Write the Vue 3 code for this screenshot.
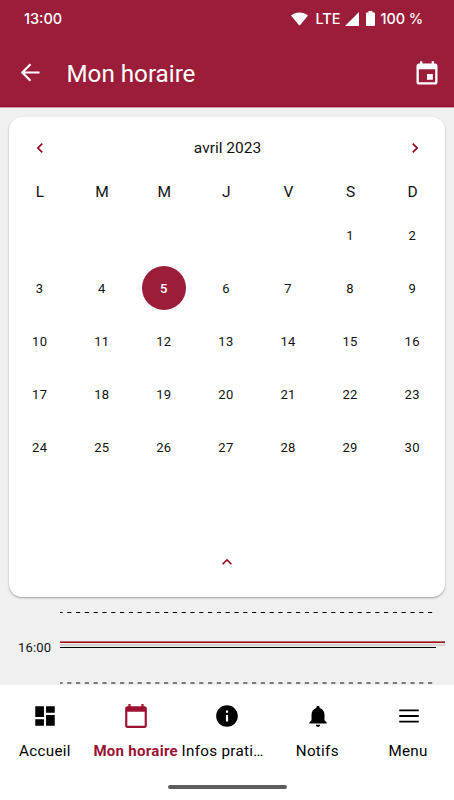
<template>
  <div class="screen">
    <header class="header">
      <div class="status-bar">
        <span class="clock">13:00</span>
        <div class="status-icons">
          <svg class="wifi" viewBox="0 0 18 14">
            <path d="M0 3.2C5-.9 13-.9 18 3.2L9.7 13.4q-.7.8-1.4 0z" fill="currentColor"/>
          </svg>
          <span class="network">LTE</span>
          <svg class="signal" viewBox="0 0 14 14">
            <path d="M0 14L14 0V14z" fill="currentColor"/>
          </svg>
          <svg class="battery" viewBox="0 0 9 15">
            <path d="M2.5 0h4v1.5H8q1 0 1 1V14q0 1-1 1H1q-1 0-1-1V2.5q0-1 1-1h1.5z" fill="currentColor"/>
          </svg>
          <span class="level">100 %</span>
        </div>
      </div>
      <div class="app-bar">
        <svg class="back" viewBox="0 0 24 24">
          <path d="M20 12H5M12 4.7L4.7 12l7.3 7.3" fill="none" stroke="currentColor" stroke-width="1.9"/>
        </svg>
        <h1 class="title">Mon horaire</h1>
        <svg class="today" viewBox="0 0 24 24">
          <path d="M17 12h-5v5h5v-5zM16 1v2H8V1H6v2H5c-1.11 0-1.99.9-1.99 2L3 19c0 1.1.89 2 2 2h14c1.1 0 2-.9 2-2V5c0-1.1-.9-2-2-2h-1V1h-2zm3 18H5V8h14v11z" fill="currentColor"/>
        </svg>
      </div>
    </header>

    <main class="content">
      <section class="calendar">
        <div class="month-row">
          <button class="arrow" @click="changeMonth(-1)">
            <svg viewBox="0 0 24 24"><path d="M15.41 7.41L14 6l-6 6 6 6 1.41-1.41L10.83 12z" fill="currentColor"/></svg>
          </button>
          <span class="month">{{ monthLabel }}</span>
          <button class="arrow" @click="changeMonth(1)">
            <svg viewBox="0 0 24 24"><path d="M10 6L8.59 7.41 13.17 12l-4.58 4.59L10 18l6-6z" fill="currentColor"/></svg>
          </button>
        </div>
        <div class="weekdays">
          <span v-for="(day, index) in weekdays" :key="index">{{ day }}</span>
        </div>
        <div class="days">
          <span v-for="n in offset" :key="'empty' + n"></span>
          <button
            v-for="day in dayCount"
            :key="day"
            class="day"
            :class="{ selected: day === selected }"
            @click="selected = day"
          >{{ day }}</button>
        </div>
        <button class="arrow collapse">
          <svg viewBox="0 0 24 24"><path d="M12 8l-6 6 1.41 1.41L12 10.83l4.59 4.58L18 14z" fill="currentColor"/></svg>
        </button>
      </section>

      <section class="timeline">
        <svg class="dashes" viewBox="0 0 374 2">
          <path d="M0 1.5H374" stroke="#000" stroke-width="1" stroke-dasharray="4.2 4.6" stroke-dashoffset="1.6"/>
        </svg>
        <div class="hour">
          <span class="hour-label">16:00</span>
          <div class="hour-lines">
            <div class="now-line"></div>
            <div class="hour-line"></div>
          </div>
        </div>
        <svg class="dashes half" viewBox="0 0 374 2">
          <path d="M0 1H374" stroke="#555" stroke-width="1.6" stroke-dasharray="4.2 4.6" stroke-dashoffset="1.6"/>
        </svg>
      </section>
    </main>

    <nav class="bottom-nav">
      <div class="tabs">
        <a v-for="tab in tabs" :key="tab.label" class="tab" :class="{ active: tab.active }">
          <svg viewBox="0 0 24 24"><path :d="tab.icon" fill="currentColor"/></svg>
          <span class="tab-label">{{ tab.label }}</span>
        </a>
      </div>
      <div class="home-handle"></div>
    </nav>
  </div>
</template>

<script setup>
import { ref, computed } from 'vue';

const weekdays = ['L', 'M', 'M', 'J', 'V', 'S', 'D'];
const months = ['janvier', 'février', 'mars', 'avril', 'mai', 'juin', 'juillet', 'août', 'septembre', 'octobre', 'novembre', 'décembre'];

const current = ref(new Date(2023, 3, 1));
const selected = ref(5);

const monthLabel = computed(() => `${months[current.value.getMonth()]} ${current.value.getFullYear()}`);
// La semaine commence le lundi
const offset = computed(() => (current.value.getDay() + 6) % 7);
const dayCount = computed(() => new Date(current.value.getFullYear(), current.value.getMonth() + 1, 0).getDate());

const changeMonth = (step) => {
  current.value = new Date(current.value.getFullYear(), current.value.getMonth() + step, 1);
  selected.value = null;
};

const tabs = [
  { label: 'Accueil', icon: 'M3 13h8V3H3v10zm0 8h8v-6H3v6zm10 0h8V11h-8v10zm0-18v6h8V3h-8z' },
  { label: 'Mon horaire', active: true, icon: 'M20 3h-1V1h-2v2H7V1H5v2H4c-1.1 0-2 .9-2 2v16c0 1.1.9 2 2 2h16c1.1 0 2-.9 2-2V5c0-1.1-.9-2-2-2zm0 18H4V8h16v13z' },
  { label: 'Infos pratiques', icon: 'M12 2C6.48 2 2 6.48 2 12s4.48 10 10 10 10-4.48 10-10S17.52 2 12 2zm1 15h-2v-6h2v6zm0-8h-2V7h2v2z' },
  { label: 'Notifs', icon: 'M12 22c1.1 0 2-.9 2-2h-4c0 1.1.89 2 2 2zm6-6v-5c0-3.07-1.64-5.64-4.5-6.32V4c0-.83-.67-1.5-1.5-1.5s-1.5.67-1.5 1.5v.68C7.63 5.36 6 7.92 6 11v5l-2 2v1h16v-1l-2-2z' },
  { label: 'Menu', icon: 'M3 18h18v-1.7H3V18zm0-5.15h18v-1.7H3v1.7zM3 6v1.7h18V6H3z' }
];
</script>

<style>
body {
  margin: 0;
}
</style>

<style scoped>
.screen {
  width: 454px;
  height: 800px;
  display: flex;
  flex-direction: column;
  overflow: hidden;
  background: #f0f0f0;
  color: #111;
  font-family: Roboto, "Liberation Sans", sans-serif;
}

button {
  padding: 0;
  border: none;
  background: none;
  color: inherit;
  font: inherit;
  letter-spacing: inherit;
  cursor: pointer;
}

svg {
  display: block;
  flex-shrink: 0;
}

.header {
  height: 107px;
  box-sizing: border-box;
  background: #9b1d3a;
  border-bottom: 1px solid #8f0d2a;
  box-shadow: 0 1px 0 #d0a5ae;
  color: #fff;
}

.status-bar {
  display: flex;
  justify-content: space-between;
  align-items: center;
  height: 37px;
  padding: 0 31px 0 24px;
  font-family: Inter, Roboto, sans-serif;
  font-size: 14.5px;
  font-weight: 500;
}

.status-icons {
  display: flex;
  align-items: center;
}

.wifi {
  width: 17px;
  height: 14px;
  margin-right: 7px;
}

.signal {
  width: 14px;
  height: 14px;
  margin: 0 7px 0 5px;
}

.battery {
  width: 9px;
  height: 15px;
  margin-right: 5px;
}

.level {
  letter-spacing: -0.1px;
}

.app-bar {
  display: flex;
  align-items: center;
  height: 71px;
  padding: 0 13px 0 17px;
}

.back {
  width: 27px;
  height: 27px;
}

.title {
  flex: 1;
  margin: 2px 0 0 22.5px;
  font-size: 24.2px;
  font-weight: 400;
}

.today {
  width: 28px;
  height: 28px;
  margin-top: 2px;
}

.content {
  flex: 1;
  padding-top: 10px;
}

.calendar {
  display: flex;
  flex-direction: column;
  width: 436px;
  height: 480px;
  margin-left: 9px;
  border-radius: 13px;
  background: #fff;
  box-shadow: 0 1px 2px rgba(0, 0, 0, 0.35);
}

.month-row {
  display: flex;
  align-items: center;
  justify-content: space-between;
  height: 61px;
  padding: 0 20px 0 21px;
}

.arrow svg {
  width: 20px;
  height: 20px;
  color: #96081e;
}

.month {
  font-size: 15.5px;
}

.weekdays,
.days {
  display: grid;
  grid-template-columns: repeat(7, 62.1px);
  text-align: center;
}

.weekdays {
  height: 30px;
  line-height: 29px;
  font-size: 15.5px;
}

.days {
  grid-auto-rows: 53px;
  margin-left: -0.4px;
  font-size: 13px;
  letter-spacing: 0.3px;
}

.day {
  width: 44px;
  height: 44px;
  margin: 5px auto 4px;
  border-radius: 50%;
}

.day.selected {
  background: #9b1d3a;
  color: #fff;
  font-weight: 500;
}

.collapse {
  align-self: center;
  margin-top: auto;
  margin-bottom: 25px;
}

.timeline {
  padding: 14px 9px 0 0;
}

.dashes {
  width: 374px;
  height: 2px;
  margin-left: 60px;
}

.dashes.half {
  margin-top: 1px;
}

.hour {
  display: flex;
  height: 68px;
}

.hour-label {
  width: 42px;
  padding: 27px 0 0 18px;
  font-size: 13px;
  letter-spacing: 0.2px;
}

.hour-lines {
  flex: 1;
  padding-top: 28px;
}

.now-line {
  height: 1px;
  border-top: 1px solid #ae6a6e;
  background: #a8050c;
  box-shadow: 0 3px 1px rgba(0, 0, 0, 0.13);
}

.hour-line {
  width: 376px;
  height: 1px;
  margin-top: 4px;
  background: #000;
}

.bottom-nav {
  height: 115px;
  background: #fff;
}

.tabs {
  display: grid;
  grid-template-columns: repeat(5, minmax(0, 1fr));
  height: 100px;
}

.tab {
  display: flex;
  flex-direction: column;
  align-items: center;
  padding-top: 18px;
  color: #000;
  font-size: 15.2px;
  letter-spacing: 0.3px;
  white-space: nowrap;
}

.tab svg {
  width: 26px;
  height: 26px;
  margin-bottom: 13px;
}

.tab-label {
  box-sizing: border-box;
  max-width: 100%;
  padding-right: 1px;
  overflow: hidden;
  text-overflow: ellipsis;
}

.tab.active {
  color: #9b1232;
  font-size: 15px;
  font-weight: 700;
}

.home-handle {
  width: 119px;
  height: 4px;
  margin: 0 auto;
  border-radius: 2px;
  background: #5d5d5d;
}
</style>
